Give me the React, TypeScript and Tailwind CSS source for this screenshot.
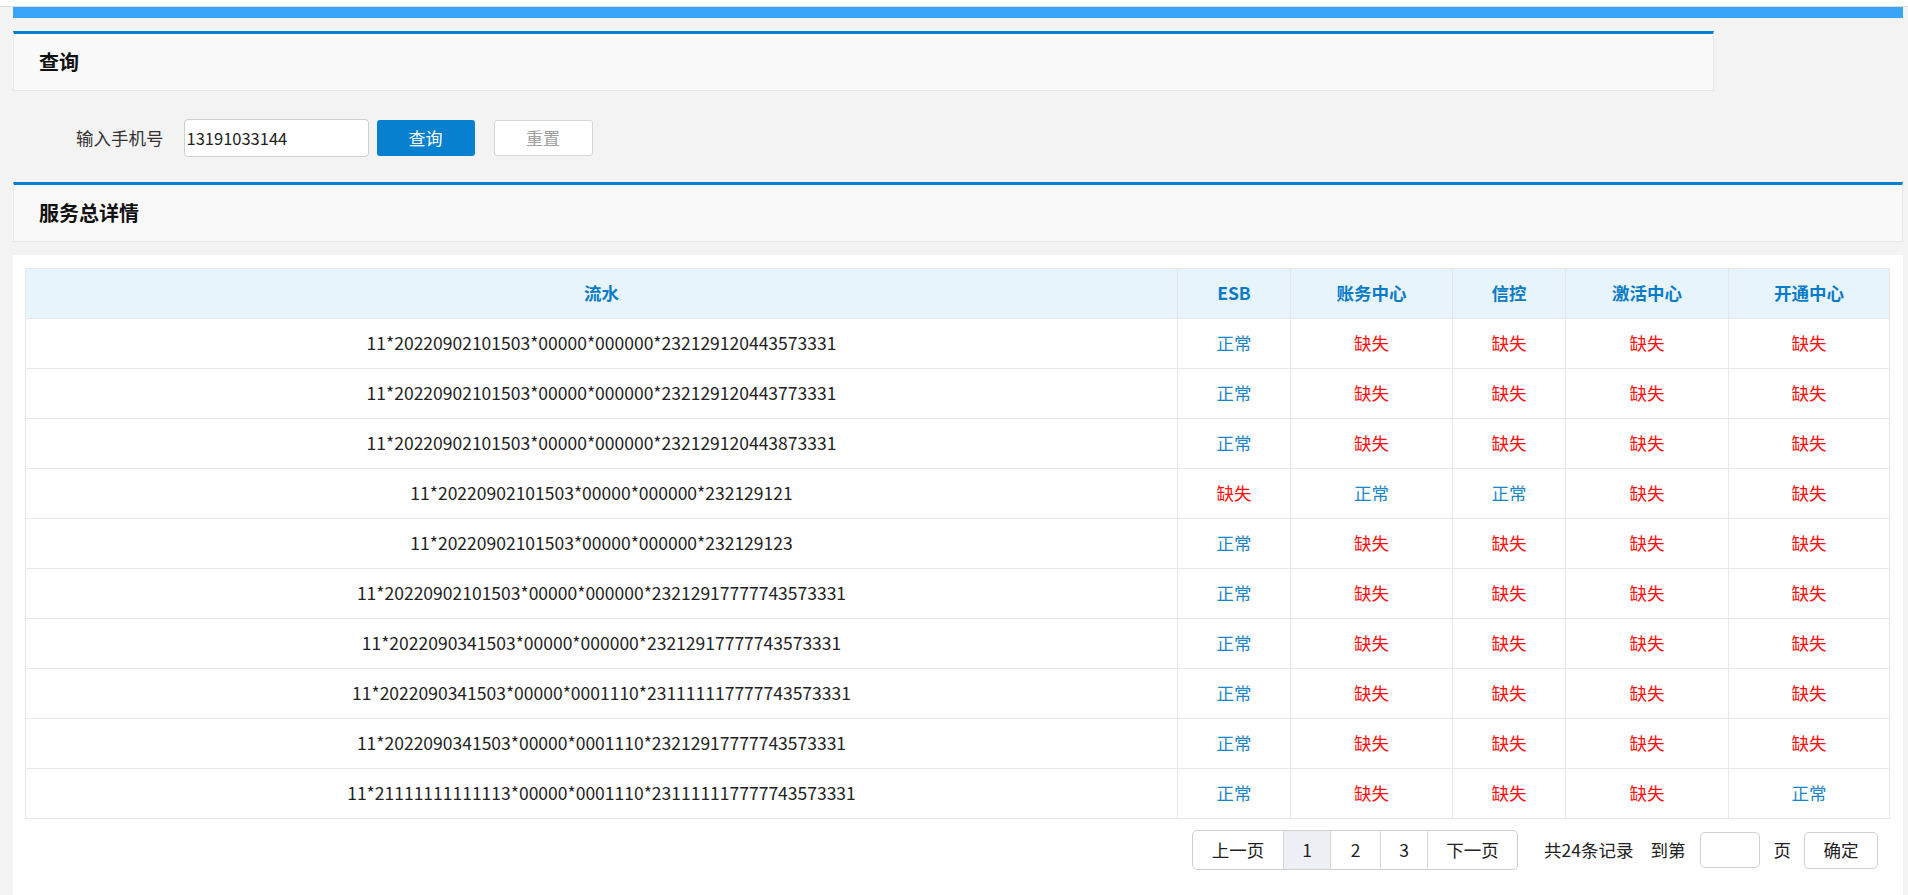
import React from "react";

const rows = [
  { id: "11*20220902101503*00000*000000*232129120443573331", s: [1, 0, 0, 0, 0] },
  { id: "11*20220902101503*00000*000000*232129120443773331", s: [1, 0, 0, 0, 0] },
  { id: "11*20220902101503*00000*000000*232129120443873331", s: [1, 0, 0, 0, 0] },
  { id: "11*20220902101503*00000*000000*232129121", s: [0, 1, 1, 0, 0] },
  { id: "11*20220902101503*00000*000000*232129123", s: [1, 0, 0, 0, 0] },
  { id: "11*20220902101503*00000*000000*23212917777743573331", s: [1, 0, 0, 0, 0] },
  { id: "11*2022090341503*00000*000000*23212917777743573331", s: [1, 0, 0, 0, 0] },
  { id: "11*2022090341503*00000*0001110*231111117777743573331", s: [1, 0, 0, 0, 0] },
  { id: "11*2022090341503*00000*0001110*23212917777743573331", s: [1, 0, 0, 0, 0] },
  { id: "11*21111111111113*00000*0001110*231111117777743573331", s: [1, 0, 0, 0, 1] },
];

const heads = ["ESB", "账务中心", "信控", "激活中心", "开通中心"];

function PanelHeader({ title, wide }: { title: string; wide?: boolean }) {
  return (
    <div
      className={`${wide ? "w-full" : "w-[1701px]"} h-[60px] border-t-[3px] border-t-[#0780d0] border-x border-b border-x-[#e8e8e8] border-b-[#e8e8e8] bg-[#f9f9f9] flex items-center pl-[25px]`}
    >
      <span className="text-[20px] font-bold text-[#111]">{title}</span>
    </div>
  );
}

function Status({ ok }: { ok: boolean }) {
  return ok ? (
    <span className="text-[#1a86c8]">正常</span>
  ) : (
    <span className="text-[#ff1010]">缺失</span>
  );
}

export default function App() {
  return (
    <div
      className="min-h-[895px] bg-[#f3f3f3] text-[17.5px] text-[#333]"
      style={{ fontFamily: '"Noto Sans CJK SC", "Noto Sans", sans-serif' }}
    >
      {/* TOP STRIP */}
      <div className="h-[7px] bg-white border-b border-[#dcdcdc]" />

      <div className="pl-[13px] pr-[5px]">
        <div className="h-[11px] bg-[#3aa4f8]" />

        {/* QUERY */}
        <div className="mt-[13px]">
          <PanelHeader title="查询" />
        </div>

        <div className="h-[91px] flex items-center pl-[63px] pt-[3px]">
          <span className="text-[#333] mr-[20px] leading-none">输入手机号</span>
          <input
            defaultValue="13191033144"
            className="w-[185px] h-[38px] bg-white border border-[#cfcfcf] rounded-[4px] pl-[2px] text-[16.5px] text-[#222] outline-none"
          />
          <button className="ml-[8px] w-[98px] h-[36px] rounded-[3px] bg-[#0780d0] text-white text-[17px]">
            查询
          </button>
          <button className="ml-[19px] w-[99px] h-[36px] rounded-[3px] bg-white border border-[#d6d6d6] text-[#a0a0a0] text-[17px]">
            重置
          </button>
        </div>

        {/* DETAILS */}
        <PanelHeader title="服务总详情" wide />

        <div className="mt-[13px] bg-white pl-[12px] pr-[13px] pt-[13px] pb-[40px]">
          <table className="w-[1864px] table-fixed border-collapse">
            <colgroup>
              <col className="w-[1152px]" />
              <col className="w-[113px]" />
              <col className="w-[162px]" />
              <col className="w-[113px]" />
              <col className="w-[163px]" />
              <col className="w-[161px]" />
            </colgroup>
            <thead>
              <tr className="h-[50px] bg-[#e8f4fb]">
                <th className="border border-[#e6e6e6] font-bold text-[#0a7cc7]">流水</th>
                {heads.map((h) => (
                  <th key={h} className="border border-[#e6e6e6] font-bold text-[#0a7cc7]">
                    {h}
                  </th>
                ))}
              </tr>
            </thead>
            <tbody>
              {rows.map((r, i) => (
                <tr key={i} className="h-[50px]">
                  <td className="border border-[#e8e8e8] text-center text-[#222]">{r.id}</td>
                  {r.s.map((v, j) => (
                    <td key={j} className="border border-[#e8e8e8] text-center">
                      <Status ok={v === 1} />
                    </td>
                  ))}
                </tr>
              ))}
            </tbody>
          </table>

          {/* PAGINATION */}
          <div className="mt-[11px] mr-[12px] flex items-center justify-end text-[#222]">
            <div className="flex h-[40px] border border-[#cfcfcf] rounded-[5px] overflow-hidden">
              <div className="w-[90px] flex items-center justify-center">上一页</div>
              <div className="w-[47px] flex items-center justify-center border-l border-[#d6d6d6] bg-[#edf0f4]">1</div>
              <div className="w-[50px] flex items-center justify-center border-l border-[#d6d6d6]">2</div>
              <div className="w-[47px] flex items-center justify-center border-l border-[#d6d6d6]">3</div>
              <div className="w-[90px] flex items-center justify-center border-l border-[#d6d6d6]">下一页</div>
            </div>
            <span className="ml-[26px]">共24条记录</span>
            <span className="ml-[17px]">到第</span>
            <input className="ml-[14px] w-[60px] h-[36px] border border-[#d0d0d0] rounded-[5px] bg-white outline-none" />
            <span className="ml-[14px]">页</span>
            <button className="ml-[13px] w-[74px] h-[37px] border border-[#d0d0d0] rounded-[5px] bg-white text-[#222]">
              确定
            </button>
          </div>
        </div>
      </div>
    </div>
  );
}
